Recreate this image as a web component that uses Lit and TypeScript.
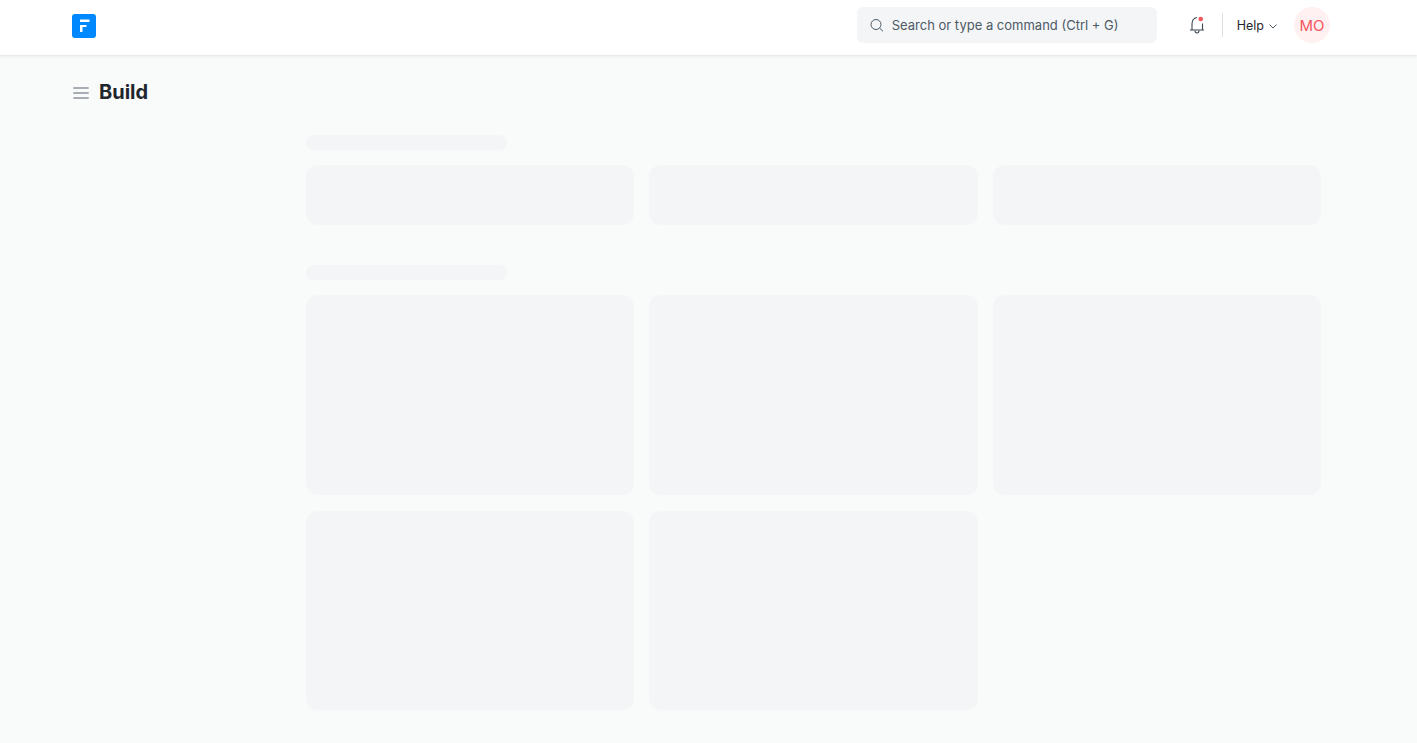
import { LitElement, html, css } from "lit";
import { customElement } from "lit/decorators.js";

@customElement("app-root")
export class AppRoot extends LitElement {
  static styles = css`
    :host { display: block; height: 743px; overflow: hidden; background: #f9fafa; font-family: Inter, "Noto Sans", sans-serif; color: #1f272e; }
    .nav { height: 55px; box-sizing: border-box; background: #fff; display: flex; align-items: center; padding: 0 87px 5px 72px; box-shadow: 0 1px 3px rgba(25,39,52,0.1), 0 0 1px rgba(25,39,52,0.08); position: relative; }
    .logo { width: 24px; height: 24px; display: block; margin-top: 2px; }
    .spacer { flex: 1; }
    .search { width: 300px; height: 36px; box-sizing: border-box; background: #f4f5f6; border-radius: 6px; display: flex; align-items: center; padding-left: 13px; gap: 8px; font-size: 13px; color: #4c5a67; margin-right: 32px; }
    .search svg { display: block; flex: none; }
    .bell { display: block; margin-right: 15px; }
    .divider { width: 1px; height: 24px; background: #dce0e3; margin-right: 14px; }
    .help { display: flex; align-items: center; gap: 5px; font-size: 12.5px; color: #1f272e; margin-right: 17px; }
    .help svg { display: block; margin-top: 2px; }
    .avatar { width: 36px; height: 36px; border-radius: 50%; background: #fff1f1; color: #f4555f; font-size: 15px; display: flex; align-items: center; justify-content: center; }
    .head { display: flex; align-items: center; gap: 10px; padding: 24px 0 0 73px; height: 26px; }
    .head svg { display: block; }
    .head h1 { margin: 0; font-size: 20px; line-height: 26px; font-weight: 700; color: #1f272e; }
    .main { padding: 30px 96px 0 306px; }
    .title { width: 201px; height: 15px; border-radius: 8px; background: #f4f5f6; margin-bottom: 15px; }
    .grid { display: grid; grid-template-columns: repeat(3, 1fr); column-gap: 15px; row-gap: 16px; margin-bottom: 40px; }
    .card { background: #f4f5f6; border-radius: 12px; }
    .short { height: 60px; }
    .tall { height: 199.5px; }
  `;

  render() {
    return html`
      <div class="nav">
        <svg class="logo" viewBox="0 0 24 24">
          <rect width="24" height="24" rx="3" fill="#0089ff"></rect>
          <path d="M8 5.500h9.500V8H8zM8 11h6.500v2h-4v5H8z" fill="#fff"></path>
        </svg>
        <div class="spacer"></div>
        <div class="search">
          <svg width="14" height="14" viewBox="0 0 14 14" fill="none" stroke="#4c5a67" stroke-width="1">
            <circle cx="6" cy="6.500" r="5"></circle>
            <path d="M9.600 10.100L13 13.300"></path>
          </svg>
          <span>Search or type a command (Ctrl + G)</span>
        </div>
        <svg class="bell" width="18" height="20" viewBox="0 0 18 20" fill="none" stroke="#3c4852" stroke-width="1.100">
          <path d="M1 15h14M3 15V9C3 5.500 5 3 8 2.500M13.500 15V8.500"></path>
          <path d="M6 15.500c0 1.500 1 2.500 2 2.500s2-1 2-2.500"></path>
          <circle cx="11.700" cy="4" r="2.300" fill="#f4555f" stroke="none"></circle>
        </svg>
        <div class="divider"></div>
        <div class="help">
          <span>Help</span>
          <svg width="8" height="5" viewBox="0 0 8 5" fill="none" stroke="#4c5a67" stroke-width="1"><path d="M.5.500L4 4 7.500.500"></path></svg>
        </div>
        <div class="avatar">MO</div>
      </div>
      <div class="head">
        <svg width="16" height="14" viewBox="0 0 16 14" stroke="#a8adb4" stroke-width="2"><path d="M.3 3h15.400M.3 8h15.400M.3 13h15.400"></path></svg>
        <h1>Build</h1>
      </div>
      <div class="main">
        <div class="title"></div>
        <div class="grid">
          <div class="card short"></div><div class="card short"></div><div class="card short"></div>
        </div>
        <div class="title"></div>
        <div class="grid">
          <div class="card tall"></div><div class="card tall"></div><div class="card tall"></div>
          <div class="card tall"></div><div class="card tall"></div>
        </div>
      </div>
    `;
  }
}
